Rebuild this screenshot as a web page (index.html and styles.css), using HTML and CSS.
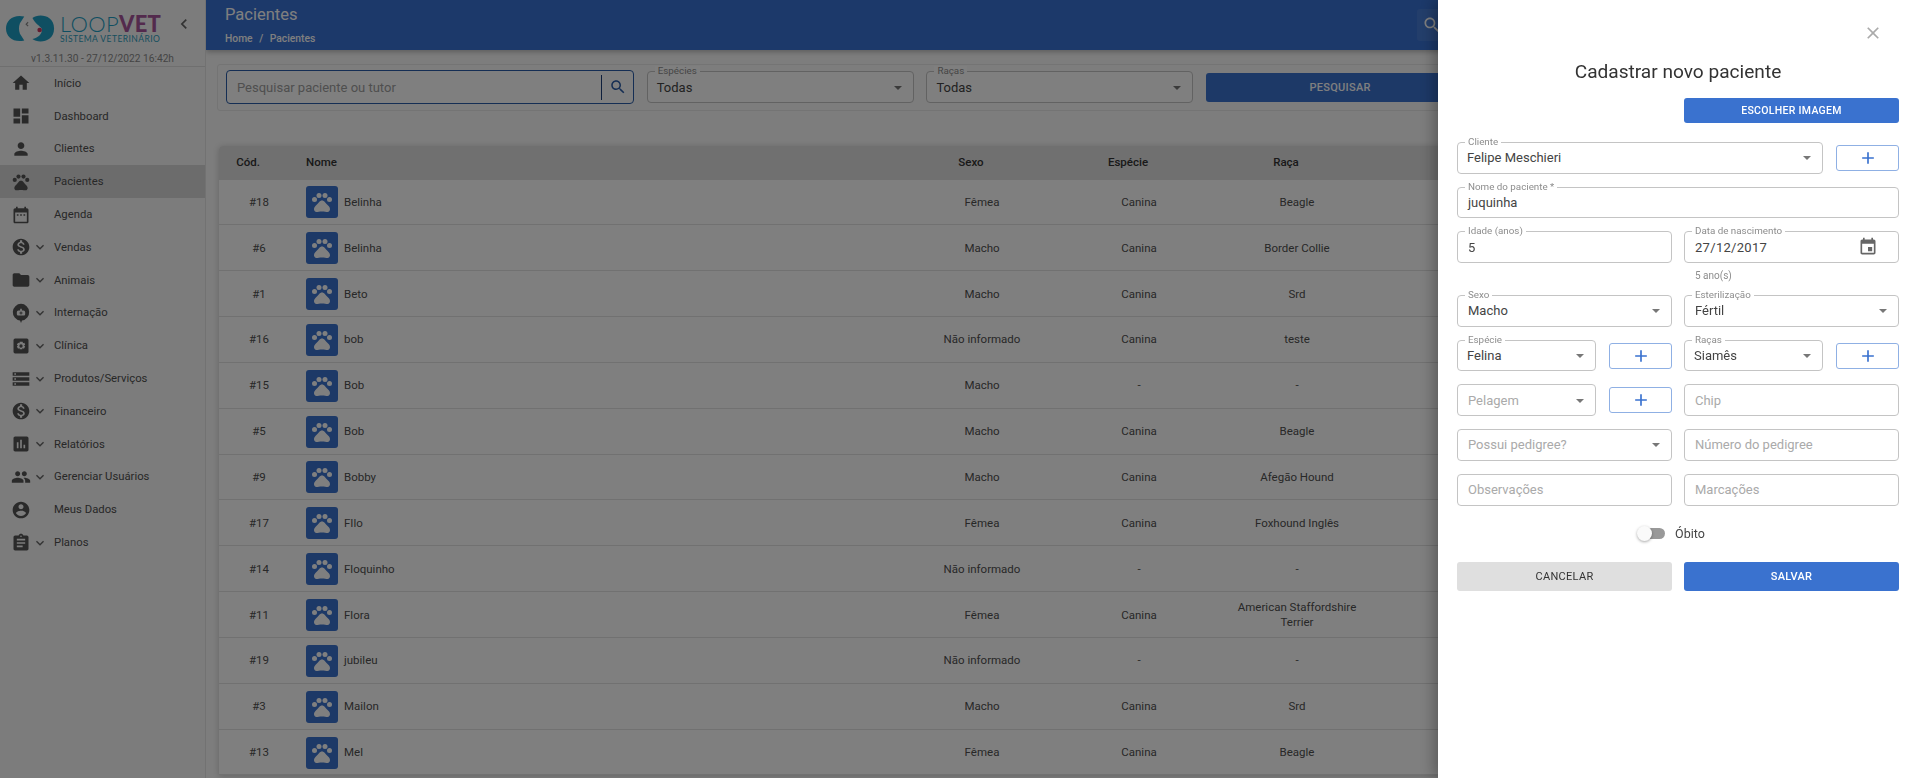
FILE: index.html
```html
<!DOCTYPE html>
<html lang="pt-BR">
<head>
    <meta charset="UTF-8">
    <meta name="viewport" content="width=device-width, initial-scale=1.0">
    <title>Pacientes - LoopVet</title>
    <link rel="stylesheet" href="styles.css">
</head>
<body>
    <svg class="sprite" xmlns="http://www.w3.org/2000/svg">
        <symbol id="i-paw" viewBox="0 0 24 24"><circle cx="4.5" cy="9.5" r="2.5"/><circle cx="9" cy="5.5" r="2.5"/><circle cx="15" cy="5.5" r="2.5"/><circle cx="19.5" cy="9.5" r="2.5"/><path d="M17.34 14.86c-.87-1.02-1.6-1.89-2.48-2.91-.46-.54-1.05-1.08-1.75-1.32-.11-.04-.22-.07-.33-.09-.25-.04-.52-.04-.78-.04s-.53 0-.79.05c-.11.02-.22.05-.33.09-.7.24-1.28.78-1.75 1.32-.87 1.02-1.6 1.89-2.48 2.91-1.31 1.31-2.92 2.76-2.62 4.79.29 1.02 1.02 2.03 2.33 2.32.73.15 3.06-.44 5.54-.44h.18c2.48 0 4.81.58 5.54.44 1.31-.29 2.04-1.31 2.33-2.32.31-2.04-1.3-3.49-2.61-4.8z"/></symbol>
        <symbol id="i-home" viewBox="0 0 24 24"><path d="M10 20v-6h4v6h5v-8h3L12 3 2 12h3v8z"/></symbol>
        <symbol id="i-dashboard" viewBox="0 0 24 24"><path d="M3 13h8V3H3v10zm0 8h8v-6H3v6zm10 0h8V11h-8v10zm0-18v6h8V3h-8z"/></symbol>
        <symbol id="i-person" viewBox="0 0 24 24"><path d="M12 12c2.21 0 4-1.79 4-4s-1.79-4-4-4-4 1.79-4 4 1.79 4 4 4zm0 2c-2.67 0-8 1.34-8 4v2h16v-2c0-2.66-5.33-4-8-4z"/></symbol>
        <symbol id="i-agenda" viewBox="0 0 24 24"><path d="M9 11H7v2h2v-2zm4 0h-2v2h2v-2zm4 0h-2v2h2v-2zm2-7h-1V2h-2v2H8V2H6v2H5c-1.11 0-1.99.9-1.99 2L3 20c0 1.1.89 2 2 2h14c1.1 0 2-.9 2-2V6c0-1.1-.9-2-2-2zm0 16H5V9h14v11z"/></symbol>
        <symbol id="i-money" viewBox="0 0 24 24"><path d="M12 2C6.48 2 2 6.48 2 12s4.48 10 10 10 10-4.48 10-10S17.52 2 12 2zm1.41 16.09V20h-2.67v-1.93c-1.71-.36-3.16-1.46-3.27-3.4h1.96c.1 1.05.82 1.87 2.65 1.87 1.96 0 2.4-.98 2.4-1.59 0-.83-.44-1.61-2.67-2.14-2.48-.6-4.18-1.62-4.18-3.67 0-1.72 1.39-2.84 3.11-3.21V4h2.67v1.95c1.86.45 2.79 1.86 2.85 3.39H14.3c-.05-1.11-.64-1.87-2.22-1.87-1.5 0-2.4.68-2.4 1.64 0 .84.65 1.39 2.67 1.91s4.18 1.39 4.18 3.91c-.01 1.83-1.38 2.83-3.12 3.16z"/></symbol>
        <symbol id="i-folder" viewBox="0 0 24 24"><path d="M10 4H4c-1.1 0-1.99.9-1.99 2L2 18c0 1.1.9 2 2 2h16c1.1 0 2-.9 2-2V8c0-1.1-.9-2-2-2h-8l-2-2z"/></symbol>
        <symbol id="i-hospital" viewBox="0 0 24 24"><path fill-rule="evenodd" d="M12 1a10 10 0 0 1 1.2 19.9L12 24l-1.200-3.100A10 10 0 0 1 12 1zM11 7v2H9a2 2 0 0 0-2 2v2.500a1.500 1.500 0 0 0 1.500 1.500h7a1.500 1.500 0 0 0 1.500-1.500V11a2 2 0 0 0-2-2h-2V7zm.4 3.200h1.200v1.200h1.200v1.200h-1.200v1.200h-1.200v-1.200h-1.200v-1.200h1.200z"/></symbol>
        <symbol id="i-clinic" viewBox="0 0 24 24"><path fill-rule="evenodd" d="M5 3h14a2 2 0 0 1 2 2v14a2 2 0 0 1-2 2H5a2 2 0 0 1-2-2V5a2 2 0 0 1 2-2zm5.500 4-.4 1.800-1.600-.8-1.500 2.400 1.400 1.100-1.400 1.100 1.500 2.600 1.600-.8.4 1.600h3l.4-1.600 1.600.8 1.500-2.600-1.400-1.100 1.400-1.100L16 8l-1.600.8L14 7zM12 10a2 2 0 1 1 0 4 2 2 0 0 1 0-4z"/></symbol>
        <symbol id="i-storage" viewBox="0 0 24 24"><path d="M2 20h20v-4H2v4zm2-3h2v2H4v-2zM2 4v4h20V4H2zm4 3H4V5h2v2zm-4 7h20v-4H2v4zm2-3h2v2H4v-2z"/></symbol>
        <symbol id="i-report" viewBox="0 0 24 24"><path d="M19 3H5c-1.1 0-2 .9-2 2v14c0 1.1.9 2 2 2h14c1.1 0 2-.9 2-2V5c0-1.1-.9-2-2-2zM9 17H7v-7h2v7zm4 0h-2V7h2v10zm4 0h-2v-4h2v4z"/></symbol>
        <symbol id="i-people" viewBox="0 0 24 24"><path d="M16 11c1.66 0 2.99-1.34 2.99-3S17.66 5 16 5c-1.66 0-3 1.34-3 3s1.34 3 3 3zm-8 0c1.66 0 2.99-1.34 2.99-3S9.66 5 8 5C6.34 5 5 6.34 5 8s1.34 3 3 3zm0 2c-2.33 0-7 1.17-7 3.5V19h14v-2.5c0-2.33-4.67-3.5-7-3.5zm8 0c-.29 0-.62.02-.97.05 1.16.84 1.97 1.97 1.97 3.45V19h6v-2.5c0-2.33-4.67-3.5-7-3.5z"/></symbol>
        <symbol id="i-account" viewBox="0 0 24 24"><path d="M12 2C6.48 2 2 6.48 2 12s4.48 10 10 10 10-4.48 10-10S17.52 2 12 2zm0 3c1.66 0 3 1.34 3 3s-1.34 3-3 3-3-1.34-3-3 1.34-3 3-3zm0 14.2c-2.5 0-4.71-1.28-6-3.22.03-1.99 4-3.08 6-3.08 1.99 0 5.97 1.09 6 3.08-1.29 1.94-3.5 3.22-6 3.22z"/></symbol>
        <symbol id="i-plan" viewBox="0 0 24 24"><path d="M19 3h-4.18C14.4 1.84 13.3 1 12 1c-1.3 0-2.4.84-2.82 2H5c-1.1 0-2 .9-2 2v14c0 1.1.9 2 2 2h14c1.1 0 2-.9 2-2V5c0-1.1-.9-2-2-2zm-7 0c.55 0 1 .45 1 1s-.45 1-1 1-1-.45-1-1 .45-1 1-1zm2 14H7v-2h7v2zm3-4H7v-2h10v2zm0-4H7V7h10v2z"/></symbol>
        <symbol id="i-down" viewBox="0 0 24 24"><path d="M16.59 8.59L12 13.17 7.41 8.59 6 10l6 6 6-6z"/></symbol>
        <symbol id="i-left" viewBox="0 0 24 24"><path d="M15.41 7.41L14 6l-6 6 6 6 1.41-1.41L10.83 12z"/></symbol>
        <symbol id="i-search" viewBox="0 0 24 24"><path d="M15.5 14h-.79l-.28-.27C15.41 12.59 16 11.11 16 9.5 16 5.91 13.09 3 9.5 3S3 5.91 3 9.5 5.91 16 9.5 16c1.61 0 3.09-.59 4.23-1.57l.27.28v.79l5 4.99L20.49 19l-4.99-5zm-6 0C7.01 14 5 11.99 5 9.5S7.01 5 9.5 5 14 7.01 14 9.5 11.99 14 9.5 14z"/></symbol>
        <symbol id="i-close" viewBox="0 0 24 24"><path d="M19 6.41L17.59 5 12 10.59 6.41 5 5 6.41 10.59 12 5 17.59 6.41 19 12 13.41 17.59 19 19 17.59 13.41 12z"/></symbol>
        <symbol id="i-add" viewBox="0 0 24 24"><path d="M19 13h-6v6h-2v-6H5v-2h6V5h2v6h6v2z"/></symbol>
        <symbol id="i-event" viewBox="0 0 24 24"><path d="M17 12h-5v5h5v-5zM16 1v2H8V1H6v2H5c-1.11 0-1.99.9-1.99 2L3 19c0 1.1.89 2 2 2h14c1.1 0 2-.9 2-2V5c0-1.1-.9-2-2-2h-1V1h-2zm3 18H5V8h14v11z"/></symbol>
    </svg>

    <aside class="sidebar">
        <div class="brand">
            <div class="brand-top">
                <svg class="brand-mark" viewBox="0 0 52 28">
                    <path fill="#1f9fc4" d="M19 1.5C8 -1 0 5 0 14s8 15 19 12.500l-4.500-7Q12.500 14 14.500 8.500z"/>
                    <path fill="#1f9fc4" d="M27.500 3C33 -1.500 50 -1 50 14S33 29.500 27.500 25C33 24 37.500 20 37.500 14.500 35 11 30.500 9 27.500 3z"/>
                    <circle cx="35" cy="15.500" r="2.400" fill="#c9375f"/>
                    <path fill="none" stroke="#888" stroke-width="1.200" d="M23 7.500l-2 2 2 2"/>
                </svg>
                <div class="brand-name">
                    <div class="brand-title">LOOP<b>VET</b></div>
                    <div class="brand-sub">SISTEMA VETERINÁRIO</div>
                </div>
                <svg class="brand-toggle"><use href="#i-left"/></svg>
            </div>
            <div class="brand-version">v1.3.11.30 - 27/12/2022 16:42h</div>
        </div>
        <nav class="menu">
            <a class="menu-item"><svg class="menu-icon"><use href="#i-home"/></svg><span class="menu-arrow"></span>Início</a>
            <a class="menu-item"><svg class="menu-icon"><use href="#i-dashboard"/></svg><span class="menu-arrow"></span>Dashboard</a>
            <a class="menu-item"><svg class="menu-icon"><use href="#i-person"/></svg><span class="menu-arrow"></span>Clientes</a>
            <a class="menu-item active"><svg class="menu-icon"><use href="#i-paw"/></svg><span class="menu-arrow"></span>Pacientes</a>
            <a class="menu-item"><svg class="menu-icon"><use href="#i-agenda"/></svg><span class="menu-arrow"></span>Agenda</a>
            <a class="menu-item"><svg class="menu-icon"><use href="#i-money"/></svg><svg class="menu-arrow"><use href="#i-down"/></svg>Vendas</a>
            <a class="menu-item"><svg class="menu-icon"><use href="#i-folder"/></svg><svg class="menu-arrow"><use href="#i-down"/></svg>Animais</a>
            <a class="menu-item"><svg class="menu-icon"><use href="#i-hospital"/></svg><svg class="menu-arrow"><use href="#i-down"/></svg>Internação</a>
            <a class="menu-item"><svg class="menu-icon"><use href="#i-clinic"/></svg><svg class="menu-arrow"><use href="#i-down"/></svg>Clínica</a>
            <a class="menu-item"><svg class="menu-icon"><use href="#i-storage"/></svg><svg class="menu-arrow"><use href="#i-down"/></svg>Produtos/Serviços</a>
            <a class="menu-item"><svg class="menu-icon"><use href="#i-money"/></svg><svg class="menu-arrow"><use href="#i-down"/></svg>Financeiro</a>
            <a class="menu-item"><svg class="menu-icon"><use href="#i-report"/></svg><svg class="menu-arrow"><use href="#i-down"/></svg>Relatórios</a>
            <a class="menu-item"><svg class="menu-icon"><use href="#i-people"/></svg><svg class="menu-arrow"><use href="#i-down"/></svg>Gerenciar Usuários</a>
            <a class="menu-item"><svg class="menu-icon"><use href="#i-account"/></svg><span class="menu-arrow"></span>Meus Dados</a>
            <a class="menu-item"><svg class="menu-icon"><use href="#i-plan"/></svg><svg class="menu-arrow"><use href="#i-down"/></svg>Planos</a>
        </nav>
    </aside>

    <main class="main">
        <header class="topbar">
            <div>
                <h1 class="topbar-title">Pacientes</h1>
                <p class="crumbs">Home <i>/</i> Pacientes</p>
            </div>
            <span class="topbar-search"><svg><use href="#i-search"/></svg></span>
        </header>

        <section class="filters">
            <div class="search-box">
                <span class="search-text">Pesquisar paciente ou tutor</span>
                <span class="search-btn"><svg><use href="#i-search"/></svg></span>
            </div>
            <div class="field filter-field">
                <span class="field-label">Espécies</span>
                <span class="field-value">Todas</span>
                <span class="caret"></span>
            </div>
            <div class="field filter-field">
                <span class="field-label">Raças</span>
                <span class="field-value">Todas</span>
                <span class="caret"></span>
            </div>
            <button class="btn filter-btn">PESQUISAR</button>
        </section>

        <section class="patients">
            <div class="row row-head">
                <div class="cell-head">Cód.</div>
                <div>Nome</div>
                <div class="cell-head">Sexo</div>
                <div class="cell-head">Espécie</div>
                <div class="cell-head">Raça</div>
            </div>
            <div class="row"><div>#18</div><div class="cell-name"><span class="avatar"><svg><use href="#i-paw"/></svg></span>Belinha</div><div>Fêmea</div><div>Canina</div><div class="cell-breed">Beagle</div></div>
            <div class="row"><div>#6</div><div class="cell-name"><span class="avatar"><svg><use href="#i-paw"/></svg></span>Belinha</div><div>Macho</div><div>Canina</div><div class="cell-breed">Border Collie</div></div>
            <div class="row"><div>#1</div><div class="cell-name"><span class="avatar"><svg><use href="#i-paw"/></svg></span>Beto</div><div>Macho</div><div>Canina</div><div class="cell-breed">Srd</div></div>
            <div class="row"><div>#16</div><div class="cell-name"><span class="avatar"><svg><use href="#i-paw"/></svg></span>bob</div><div>Não informado</div><div>Canina</div><div class="cell-breed">teste</div></div>
            <div class="row"><div>#15</div><div class="cell-name"><span class="avatar"><svg><use href="#i-paw"/></svg></span>Bob</div><div>Macho</div><div>-</div><div class="cell-breed">-</div></div>
            <div class="row"><div>#5</div><div class="cell-name"><span class="avatar"><svg><use href="#i-paw"/></svg></span>Bob</div><div>Macho</div><div>Canina</div><div class="cell-breed">Beagle</div></div>
            <div class="row"><div>#9</div><div class="cell-name"><span class="avatar"><svg><use href="#i-paw"/></svg></span>Bobby</div><div>Macho</div><div>Canina</div><div class="cell-breed">Afegão Hound</div></div>
            <div class="row"><div>#17</div><div class="cell-name"><span class="avatar"><svg><use href="#i-paw"/></svg></span>FIlo</div><div>Fêmea</div><div>Canina</div><div class="cell-breed">Foxhound Inglês</div></div>
            <div class="row"><div>#14</div><div class="cell-name"><span class="avatar"><svg><use href="#i-paw"/></svg></span>Floquinho</div><div>Não informado</div><div>-</div><div class="cell-breed">-</div></div>
            <div class="row"><div>#11</div><div class="cell-name"><span class="avatar"><svg><use href="#i-paw"/></svg></span>Flora</div><div>Fêmea</div><div>Canina</div><div class="cell-breed">American Staffordshire Terrier</div></div>
            <div class="row"><div>#19</div><div class="cell-name"><span class="avatar"><svg><use href="#i-paw"/></svg></span>jubileu</div><div>Não informado</div><div>-</div><div class="cell-breed">-</div></div>
            <div class="row"><div>#3</div><div class="cell-name"><span class="avatar"><svg><use href="#i-paw"/></svg></span>Mailon</div><div>Macho</div><div>Canina</div><div class="cell-breed">Srd</div></div>
            <div class="row"><div>#13</div><div class="cell-name"><span class="avatar"><svg><use href="#i-paw"/></svg></span>Mel</div><div>Fêmea</div><div>Canina</div><div class="cell-breed">Beagle</div></div>
        </section>
    </main>

    <div class="backdrop"></div>

    <aside class="drawer">
        <svg class="drawer-close"><use href="#i-close"/></svg>
        <h2 class="drawer-title">Cadastrar novo paciente</h2>
        <div class="image-row">
            <button class="btn image-btn">ESCOLHER IMAGEM</button>
        </div>

        <div class="form">
            <div class="form-row">
                <div class="with-add">
                    <div class="field select-field">
                        <span class="field-label">Cliente</span>
                        <span class="field-value">Felipe Meschieri</span>
                        <span class="caret"></span>
                    </div>
                    <button class="add-btn"><svg><use href="#i-add"/></svg></button>
                </div>
            </div>
            <div class="form-row">
                <div class="field">
                    <span class="field-label">Nome do paciente *</span>
                    <span class="field-value">juquinha</span>
                </div>
            </div>
            <div class="form-row two">
                <div class="field">
                    <span class="field-label">Idade (anos)</span>
                    <span class="field-value">5</span>
                </div>
                <div>
                    <div class="field">
                        <span class="field-label">Data de nascimento</span>
                        <span class="field-value date-value">27/12/2017</span>
                        <svg class="field-calendar"><use href="#i-event"/></svg>
                    </div>
                    <p class="field-help">5 ano(s)</p>
                </div>
            </div>
            <div class="form-row two">
                <div class="field">
                    <span class="field-label">Sexo</span>
                    <span class="field-value">Macho</span>
                    <span class="caret"></span>
                </div>
                <div class="field">
                    <span class="field-label">Esterilização</span>
                    <span class="field-value">Fértil</span>
                    <span class="caret"></span>
                </div>
            </div>
            <div class="form-row two">
                <div class="with-add">
                    <div class="field select-field">
                        <span class="field-label">Espécie</span>
                        <span class="field-value">Felina</span>
                        <span class="caret"></span>
                    </div>
                    <button class="add-btn"><svg><use href="#i-add"/></svg></button>
                </div>
                <div class="with-add">
                    <div class="field select-field">
                        <span class="field-label">Raças</span>
                        <span class="field-value">Siamês</span>
                        <span class="caret"></span>
                    </div>
                    <button class="add-btn"><svg><use href="#i-add"/></svg></button>
                </div>
            </div>
            <div class="form-row two">
                <div class="with-add">
                    <div class="field">
                        <span class="field-hint">Pelagem</span>
                        <span class="caret"></span>
                    </div>
                    <button class="add-btn"><svg><use href="#i-add"/></svg></button>
                </div>
                <div class="field"><span class="field-hint">Chip</span></div>
            </div>
            <div class="form-row two">
                <div class="field">
                    <span class="field-hint">Possui pedigree?</span>
                    <span class="caret"></span>
                </div>
                <div class="field"><span class="field-hint">Número do pedigree</span></div>
            </div>
            <div class="form-row two">
                <div class="field"><span class="field-hint">Observações</span></div>
                <div class="field"><span class="field-hint">Marcações</span></div>
            </div>
        </div>

        <div class="death-row">
            <span class="switch"><span class="switch-thumb"></span></span>
            <span class="switch-label">Óbito</span>
        </div>

        <div class="actions">
            <button class="btn btn-muted">CANCELAR</button>
            <button class="btn">SALVAR</button>
        </div>
    </aside>
</body>
</html>
```

FILE: styles.css
```css
:root {
    --primary: #3a72cf;
    --text: #444;
    --muted: #9e9e9e;
    --line: #c4c4c4;
}

* {
    box-sizing: border-box;
}

html,
body {
    height: 100%;
}

body {
    margin: 0;
    display: flex;
    overflow: hidden;
    background: #fafafa;
    color: var(--text);
    font-family: 'Roboto', 'Liberation Sans', sans-serif;
    font-size: 12px;
}

.sprite {
    display: none;
}

svg {
    fill: currentColor;
}

/* sidebar */

.sidebar {
    width: 206px;
    flex: none;
    background: #f8f8f8;
    border-right: 1px solid #e4e4e4;
}

.brand {
    height: 67px;
    border-bottom: 1px solid #dedede;
    padding: 15px 0 0 6px;
}

.brand-top {
    display: flex;
    align-items: flex-start;
}

.brand-mark {
    width: 50px;
    height: 27px;
    flex: none;
}

.brand-name {
    margin-left: 4px;
    width: 105px;
}

.brand-title {
    font-family: 'Lato', sans-serif;
    font-size: 22px;
    line-height: 17px;
    font-weight: 300;
    color: #1f9fc4;
    letter-spacing: 0.3px;
}

.brand-title b {
    font-weight: 900;
    color: #a7559a;
}

.brand-sub {
    margin-top: 3px;
    font-family: 'Lato', sans-serif;
    font-size: 8.5px;
    line-height: 9px;
    color: #2c9ebd;
    letter-spacing: 0.45px;
    white-space: nowrap;
}

.brand-toggle {
    width: 20px;
    height: 20px;
    margin: -1px 0 0 9px;
    color: #666;
}

.brand-version {
    margin-top: 8px;
    padding-right: 6px;
    text-align: center;
    font-size: 10.2px;
    line-height: 13px;
    color: #8a8a8a;
}

.menu-item {
    height: 32.8px;
    display: flex;
    align-items: center;
    font-size: 11.3px;
    color: #505050;
    padding-left: 10.5px;
}

.menu-item.active {
    background: #d8d8d8;
}

.menu-icon {
    width: 20px;
    height: 20px;
    flex: none;
    color: #555;
}

.menu-arrow {
    width: 16px;
    height: 16px;
    flex: none;
    margin: 0 6px 0 1.5px;
    color: #666;
}

/* page */

.main {
    flex: 1;
    min-width: 0;
    overflow: hidden;
}

.topbar {
    height: 50px;
    background: #3872d4;
    color: #fff;
    padding: 6px 0 0 19px;
    display: flex;
    justify-content: space-between;
    box-shadow: 0 2px 5px rgba(0, 0, 0, 0.25);
}

.topbar-title {
    margin: 0;
    font-size: 16.5px;
    line-height: 17px;
    font-weight: 400;
}

.crumbs {
    margin: 10px 0 0;
    font-size: 10.3px;
    line-height: 11px;
    font-weight: 500;
}

.crumbs i {
    font-style: normal;
    margin: 0 4px;
}

.topbar-search {
    width: 60px;
    height: 32px;
    margin: 3px 440px 0 0;
    background: rgba(255, 255, 255, 0.08);
    border-radius: 3px;
    padding: 6px 0 0 5px;
}

.topbar-search svg {
    width: 20px;
    height: 20px;
}

.filters {
    width: 1680px;
    height: 46.5px;
    margin: 14px 0 0 11px;
    padding: 5px 8px;
    border: 1px solid #e8e8e8;
    border-radius: 3px;
    display: flex;
    align-items: center;
    gap: 12.7px;
}

.search-box {
    width: 408px;
    height: 34px;
    flex: none;
    background: #fff;
    border: 1px solid #2b5da8;
    border-radius: 4px;
    display: flex;
    align-items: center;
    padding-left: 10px;
    font-size: 13px;
    color: var(--muted);
}

.search-text {
    flex: 1;
}

.search-btn {
    width: 32px;
    height: 25px;
    border-left: 1px solid #1d3f78;
    display: flex;
    align-items: center;
    justify-content: center;
    color: #2b5da8;
}

.search-btn svg {
    width: 18px;
    height: 18px;
}

.field {
    position: relative;
    flex: 1;
    height: 31.7px;
    background: #fff;
    border: 1px solid var(--line);
    border-radius: 4px;
    display: flex;
    align-items: center;
    padding: 0 10px;
    font-size: 13px;
    min-width: 0;
}

.field-label {
    position: absolute;
    top: -6px;
    left: 7px;
    padding: 0 3px;
    background: #fff;
    font-size: 9.8px;
    line-height: 10px;
    color: #8d8d8d;
    white-space: nowrap;
}

.field-value {
    flex: 1;
}

.date-value {
    letter-spacing: 0.3px;
}

.field-hint {
    flex: 1;
    color: #aaa;
}

.caret {
    width: 0;
    height: 0;
    flex: none;
    margin: 1px 1px 0 0;
    border-left: 4px solid transparent;
    border-right: 4px solid transparent;
    border-top: 4.5px solid #777;
}

.filter-field {
    width: 267px;
    flex: none;
    padding-left: 9px;
}

.btn {
    height: 29px;
    border: 0;
    border-radius: 3px;
    background: var(--primary);
    color: #fff;
    font-family: inherit;
    font-size: 11px;
    font-weight: 500;
    letter-spacing: 0.3px;
}

.filter-btn {
    width: 268px;
    flex: none;
}

/* list */

.patients {
    width: 1690px;
    margin: 35px 0 0 13px;
    background: #fff;
    border-radius: 4px 4px 0 0;
    box-shadow: 0 1px 6px rgba(0, 0, 0, 0.2);
}

.row {
    height: 45.85px;
    padding-top: 1px;
    display: grid;
    grid-template-columns: 80px 605px 156px 158px 158px;
    align-items: center;
    text-align: center;
    font-size: 11.5px;
    line-height: 15px;
    color: #505050;
    border-bottom: 1px solid #e2e2e2;
}

.row-head {
    height: 34px;
    padding-top: 0;
    background: #e0e0e0;
    border-bottom: 0;
    border-radius: 4px 4px 0 0;
    color: #333;
    font-weight: 500;
}

.row-head > div:nth-child(2) {
    text-align: left;
    padding-left: 7px;
}

.cell-head {
    padding-right: 22px;
}

.cell-name {
    display: flex;
    align-items: center;
    gap: 6px;
    padding-left: 7px;
    text-align: left;
}

.cell-breed {
    padding: 0 15px;
}

.avatar {
    width: 32px;
    height: 32px;
    background: var(--primary);
    border-radius: 3px;
    color: #fff;
    display: flex;
    align-items: center;
    justify-content: center;
}

.avatar svg {
    width: 24px;
    height: 24px;
}

/* modal */

.backdrop {
    position: fixed;
    inset: 0;
    background: rgba(0, 0, 0, 0.5);
}

.drawer {
    position: fixed;
    top: 0;
    right: 0;
    bottom: 0;
    width: 479px;
    background: #fff;
    padding: 0 18px 0 19px;
    box-shadow: -4px 0 14px rgba(0, 0, 0, 0.3);
}

.drawer-close {
    position: absolute;
    top: 23px;
    right: 34px;
    width: 20px;
    height: 20px;
    color: #aaa;
}

.drawer-title {
    margin: 0;
    padding-top: 60px;
    font-size: 19.1px;
    line-height: 24px;
    font-weight: 400;
    text-align: center;
    color: #333;
}

.image-row {
    margin-top: 14px;
    display: flex;
    justify-content: flex-end;
}

.image-btn {
    width: 215px;
    height: 25px;
    font-size: 10.5px;
}

.form {
    margin-top: 19px;
    display: flex;
    flex-direction: column;
    gap: 13px;
}

.form-row {
    display: flex;
}

.form-row.two {
    display: grid;
    grid-template-columns: 215px 215px;
    gap: 12px;
}

.with-add {
    flex: 1;
    display: flex;
    align-items: center;
    gap: 13px;
    min-width: 0;
}

.select-field {
    padding-left: 9px;
}

.add-btn {
    width: 63px;
    height: 26px;
    flex: none;
    background: #fff;
    border: 1px solid #8fb0e4;
    border-radius: 3px;
    color: var(--primary);
    padding: 0;
    display: flex;
    align-items: center;
    justify-content: center;
}

.add-btn svg {
    width: 20px;
    height: 20px;
}

.field-calendar {
    width: 20px;
    height: 20px;
    flex: none;
    margin-right: 10px;
    color: #666;
}

.field-help {
    margin: 0;
    padding: 6px 0 0 11px;
    height: 19px;
    font-size: 10px;
    line-height: 13px;
    color: #8d8d8d;
}

.death-row {
    margin-top: 18px;
    height: 20px;
    display: flex;
    align-items: center;
    justify-content: center;
    gap: 10px;
    padding-right: 12px;
    font-size: 12.5px;
}

.switch {
    position: relative;
    width: 26px;
    height: 11px;
    background: #999;
    border-radius: 6px;
}

.switch-thumb {
    position: absolute;
    top: -2px;
    left: -2px;
    width: 15px;
    height: 15px;
    border-radius: 50%;
    background: #fafafa;
    box-shadow: 0 1px 3px rgba(0, 0, 0, 0.35);
}

.actions {
    margin-top: 18px;
    display: grid;
    grid-template-columns: 215px 215px;
    gap: 12px;
}

.btn-muted {
    background: #dfdfdf;
    color: #333;
    font-weight: 400;
}
```
